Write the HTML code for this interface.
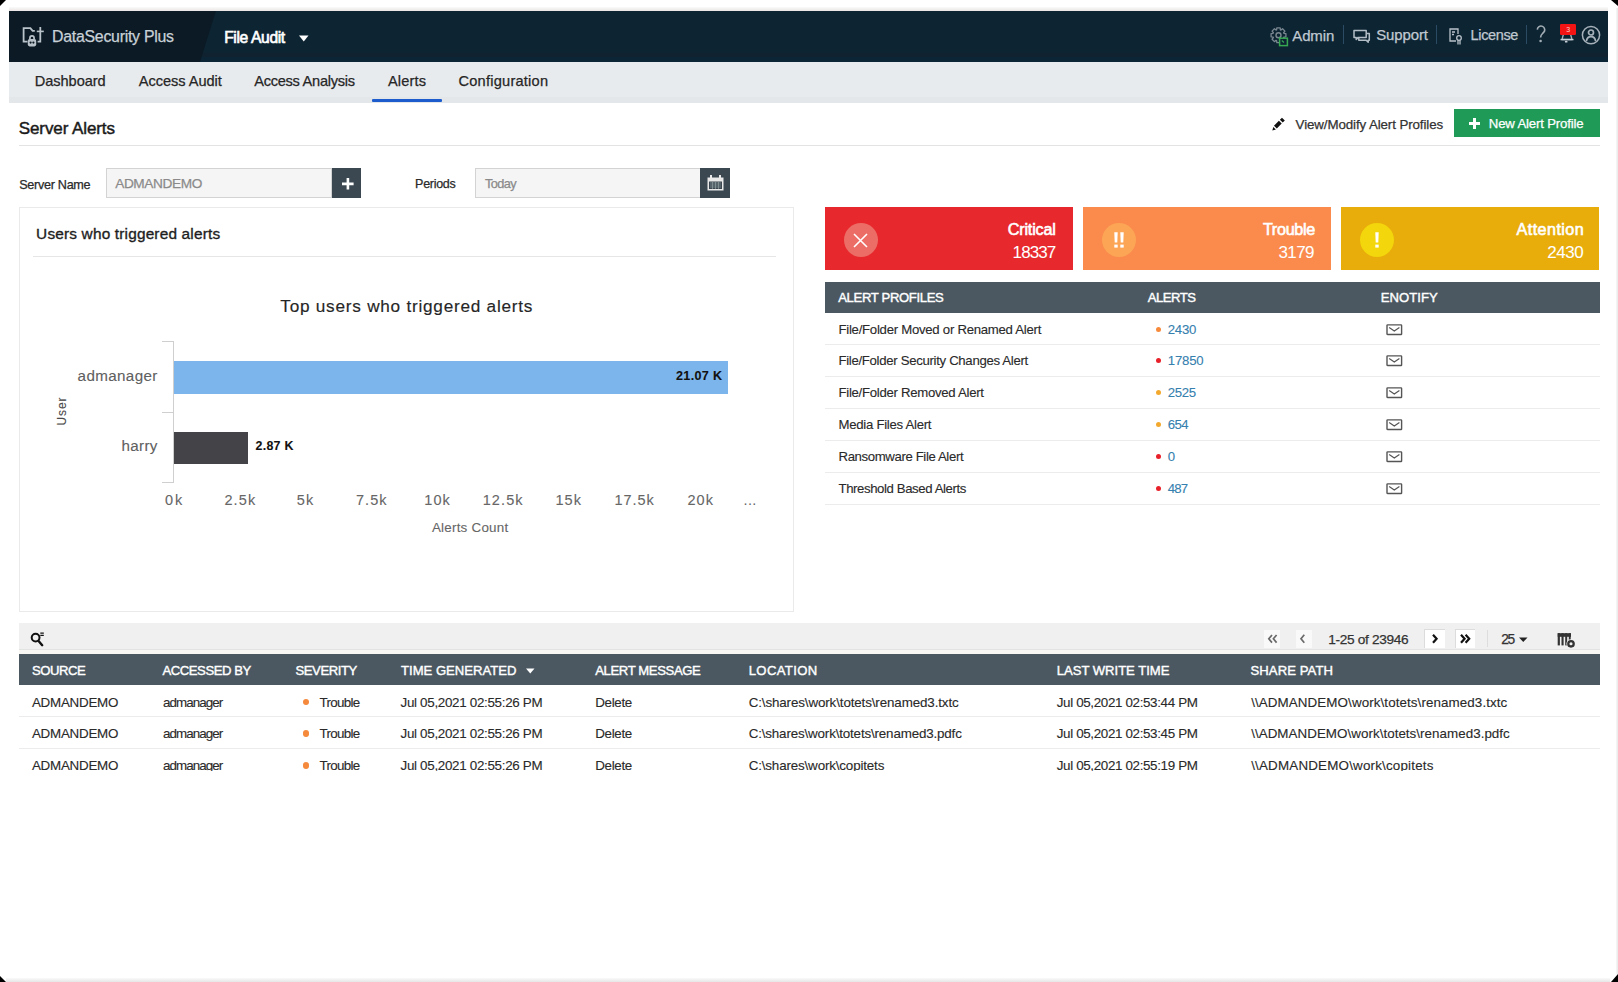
<!DOCTYPE html>
<html><head><meta charset="utf-8"><title>Server Alerts</title>
<style>
html,body{margin:0;padding:0;}
body{width:1618px;height:982px;position:relative;overflow:hidden;background:#fff;font-family:"Liberation Sans",sans-serif;}
body div{position:absolute;}
.t{white-space:nowrap;line-height:1;-webkit-text-stroke:0.25px currentColor;}
svg{position:absolute;}
</style></head><body>

<svg style="left:0;top:0" width="8" height="8"><path d="M0 0H6L0 6Z" fill="#000"/></svg>
<svg style="left:1608px;top:0" width="10" height="8"><path d="M3 0H10V6Z" fill="#000"/></svg>
<svg style="left:0;top:974px" width="8" height="8"><path d="M0 2L6 8H0Z" fill="#000"/></svg>
<svg style="left:1608px;top:974px" width="10" height="8"><path d="M10 0V8H3Z" fill="#000"/></svg>
<div style="left:6px;top:978px;width:1604px;height:4px;background:linear-gradient(#fafafa,#e6e6e6);"></div>
<div style="left:1616px;top:8px;width:2px;height:966px;background:linear-gradient(90deg,#f8f8f8,#e8e8e8);"></div>
<div style="left:9px;top:7px;width:1599px;height:4px;background:linear-gradient(#fbfafa,#ebe5e5);"></div>
<div style="left:9px;top:11px;width:1599px;height:51px;background:#0d2533;"></div>
<div style="left:200px;top:53px;width:1408px;height:4px;background:#10222f;"></div>
<div style="left:200px;top:57px;width:1408px;height:5px;background:#0b2536;"></div>
<svg style="left:9px;top:11px" width="210" height="51"><path d="M0 0H207L191 51H0Z" fill="#0b1a24"/></svg>
<svg style="left:18px;top:22px" width="32" height="30" viewBox="0 0 32 30" fill="none" stroke="#b9c2c9" stroke-width="1.8">
<path d="M9.5 19.6H5.6V6.2H12.4L14.6 8.8H16.8"/><path d="M22.3 5V19.6H19.6"/><path d="M18.8 9.4H25.8" stroke-width="1.6"/>
<path d="M11.9 17.5V15.9A2.1 2.1 0 0 1 16.1 15.9V17.5" stroke-width="1.7"/>
<rect x="9.8" y="17" width="8.4" height="7.4" rx="1.8" fill="#b9c2c9" stroke="none"/>
<circle cx="12.6" cy="20.6" r="1.1" fill="#0a1821" stroke="none"/><circle cx="15.4" cy="20.6" r="1.1" fill="#0a1821" stroke="none"/>
</svg>
<div class="t" style="left:52.10px;top:29.30px;font-size:15.89px;letter-spacing:-0.269px;color:#c9d1d8;">DataSecurity Plus</div>
<div class="t" style="left:224.20px;top:29.51px;font-size:15.64px;letter-spacing:-0.361px;color:#ffffff;-webkit-text-stroke:0.65px currentColor;">File Audit</div>
<svg style="left:299px;top:35px" width="10" height="7"><path d="M0 0.5H9.5L4.75 6.5Z" fill="#fff"/></svg>
<div class="t" style="left:1292.30px;top:27.87px;font-size:14.98px;letter-spacing:-0.116px;color:#c0c9d1;">Admin</div>
<div class="t" style="left:1376.20px;top:27.88px;font-size:14.96px;letter-spacing:-0.106px;color:#c0c9d1;">Support</div>
<div class="t" style="left:1470.60px;top:28.27px;font-size:14.51px;letter-spacing:-0.364px;color:#c0c9d1;">License</div>
<div style="left:1343px;top:25px;width:1px;height:19px;background:#2b4a63;"></div>
<div style="left:1436px;top:25px;width:1px;height:19px;background:#2b4a63;"></div>
<div style="left:1526px;top:25px;width:1px;height:19px;background:#2b4a63;"></div>
<svg style="left:1268px;top:25px" width="22" height="22" viewBox="0 0 22 22" fill="none" stroke="#7a8791">
<path d="M15.87 8.30L17.92 8.54L17.92 11.86L15.87 12.10L15.64 12.66L16.92 14.27L14.57 16.62L12.96 15.34L12.40 15.57L12.16 17.62L8.84 17.62L8.60 15.57L8.04 15.34L6.43 16.62L4.08 14.27L5.36 12.66L5.13 12.10L3.08 11.86L3.08 8.54L5.13 8.30L5.36 7.74L4.08 6.13L6.43 3.78L8.04 5.06L8.60 4.83L8.84 2.78L12.16 2.78L12.40 4.83L12.96 5.06L14.57 3.78L16.92 6.13L15.64 7.74Z" stroke-width="1.3" stroke-linejoin="round"/>
<circle cx="10.5" cy="10.2" r="2.5" stroke-width="1.4"/>
<rect x="11.6" y="13.2" width="7.8" height="7.4" fill="#0d2533" stroke="#37a852" stroke-width="1.5"/>
<path d="M13.8 15.5L16 17.5" stroke="#37a852" stroke-width="1.1"/>
</svg>
<svg style="left:1352px;top:28px" width="20" height="17" viewBox="0 0 20 17" fill="none" stroke="#b3bdc6" stroke-width="1.5" stroke-linejoin="round">
<path d="M2 2.4H14.2V9.4H6.2L4.2 11.4V9.4H2Z"/><path d="M14.2 5.4H17.3V12.3H16.2V14.3L14.2 12.3H6.8V9.6"/>
</svg>
<svg style="left:1449.2px;top:28px" width="15" height="17" viewBox="0 0 15 17" fill="none" stroke="#b9c2ca" stroke-width="1.3">
<path d="M7 13H1V1H9V6"/><path d="M3 4H6M3 6.5H5"/><circle cx="10" cy="10" r="2.3"/><path d="M9 12.3V16.5M11 12.3V16.5"/>
</svg>
<svg style="left:1535px;top:25px" width="12" height="19" viewBox="0 0 12 19" fill="none" stroke="#a3adb5" stroke-width="1.6">
<path d="M2.3 4.6A3.7 3.7 0 1 1 8.6 7.4C7.2 8.9 5.6 9.6 5.6 12.6"/><circle cx="5.6" cy="16" r="1.3" fill="#a3adb5" stroke="none"/></svg>
<svg style="left:1558px;top:23px" width="20" height="22" viewBox="0 0 20 22" fill="none">
<path d="M4 16.5L5.5 11H12.5L14 16.5Z" stroke="#a9b3bb" stroke-width="1.3" stroke-linejoin="round"/><path d="M2.5 16.6H15.5" stroke="#c9d1d8" stroke-width="1.4"/><ellipse cx="8.2" cy="18.7" rx="1.4" ry="0.9" fill="#c9d1d8"/>
<rect x="2" y="1" width="16" height="11" rx="1.2" fill="#f41414"/>
<text x="10.2" y="8.6" font-family="Liberation Sans" font-size="7" fill="#ffd0d0" text-anchor="middle">3</text>
</svg>
<svg style="left:1581px;top:25px" width="20" height="20" viewBox="0 0 20 20" fill="none" stroke="#a7b1ba" stroke-width="1.5">
<circle cx="10" cy="10.1" r="8.6"/><circle cx="10" cy="7.5" r="2.5" stroke-width="1.7"/><path d="M5.4 16.2C5.8 13 7.6 11.6 10 11.6S14.2 13 14.6 16.2" stroke-width="1.7"/>
</svg>
<div style="left:9px;top:62px;width:1599px;height:41px;background:#e8ebee;"></div>
<div style="left:9px;top:97px;width:1599px;height:6px;background:#e4e7ea;"></div>
<div class="t" style="left:34.80px;top:74.49px;font-size:14.60px;letter-spacing:-0.062px;color:#262626;">Dashboard</div>
<div class="t" style="left:138.70px;top:74.39px;font-size:14.60px;letter-spacing:-0.035px;color:#262626;">Access Audit</div>
<div class="t" style="left:254.20px;top:74.29px;font-size:14.60px;letter-spacing:-0.270px;color:#262626;">Access Analysis</div>
<div class="t" style="left:388.00px;top:74.29px;font-size:14.60px;letter-spacing:0.139px;color:#262626;">Alerts</div>
<div class="t" style="left:458.50px;top:74.29px;font-size:14.60px;letter-spacing:0.228px;color:#262626;">Configuration</div>
<div style="left:372px;top:99px;width:70px;height:3px;background:#1c5ccd;border-radius:1px;"></div>
<div class="t" style="left:18.70px;top:120.35px;font-size:17.00px;letter-spacing:-0.085px;color:#1a1a1a;-webkit-text-stroke:0.45px currentColor;">Server Alerts</div>
<div style="left:19px;top:145px;width:1581px;height:1px;background:#e3e3e3;"></div>
<svg style="left:1268px;top:114px" width="20" height="20" viewBox="0 0 20 20"><path d="M7.4 13.1L12.3 8.2M13.3 7.2L15.4 5.1" stroke="#111" stroke-width="4"/><path d="M4.3 16.5L5.3 12.9L7.9 15.5Z" fill="#111"/></svg>
<div class="t" style="left:1295.60px;top:117.56px;font-size:13.34px;letter-spacing:-0.104px;color:#333333;">View/Modify Alert Profiles</div>
<div style="left:1454px;top:109px;width:146px;height:28px;background:#1f9b57;"></div>
<svg style="left:1469px;top:118px" width="11" height="11"><path d="M4 0H7V4H11V7H7V11H4V7H0V4H4Z" fill="#fff"/></svg>
<div class="t" style="left:1488.80px;top:117.18px;font-size:13.20px;letter-spacing:-0.172px;color:#ffffff;">New Alert Profile</div>
<div class="t" style="left:19.20px;top:178.66px;font-size:12.64px;letter-spacing:-0.296px;color:#2a2a2a;">Server Name</div>
<div style="left:106px;top:168px;width:224px;height:28px;background:#f5f5f5;border:1px solid #d3d3d3;"></div>
<div class="t" style="left:115.20px;top:176.98px;font-size:13.67px;letter-spacing:-0.393px;color:#8a8a8a;">ADMANDEMO</div>
<div style="left:332px;top:168px;width:29px;height:30px;background:#3b4852;"></div>
<svg style="left:342px;top:177.5px" width="12" height="12"><path d="M4.6 0H7.2V4.6H11.6V7.2H7.2V11.6H4.6V7.2H0V4.6H4.6Z" fill="#fff"/></svg>
<div class="t" style="left:415.10px;top:177.79px;font-size:12.49px;letter-spacing:-0.289px;color:#2a2a2a;">Periods</div>
<div style="left:475px;top:168px;width:224px;height:28px;background:#f5f5f5;border:1px solid #d3d3d3;"></div>
<div class="t" style="left:485.10px;top:178.06px;font-size:12.76px;letter-spacing:-0.640px;color:#8a8a8a;">Today</div>
<div style="left:700px;top:168px;width:30px;height:30px;background:#3b4852;"></div>
<svg style="left:707px;top:175px" width="17" height="16" viewBox="0 0 17 16"><rect x="0.5" y="2.5" width="16" height="13" fill="#e8e8e8"/><rect x="2" y="6.5" width="13" height="7.5" fill="#3c4650"/><rect x="3" y="0" width="2" height="4" fill="#e8e8e8"/><rect x="12" y="0" width="2" height="4" fill="#e8e8e8"/>
<path d="M3 8H14M3 10H14M3 12H14M5.5 7V14M8.5 7V14M11.5 7V14" stroke="#9aa" stroke-width="0.6"/></svg>
<div style="left:19px;top:207px;width:773px;height:403px;background:#fff;border:1px solid #eaeaea;"></div>
<div class="t" style="left:36.10px;top:226.01px;font-size:15.40px;letter-spacing:0.175px;color:#1e1e1e;-webkit-text-stroke:0.35px currentColor;">Users who triggered alerts</div>
<div style="left:33px;top:256px;width:743px;height:1px;background:#e6e6e6;"></div>
<div class="t" style="left:280.30px;top:297.98px;font-size:17.20px;letter-spacing:0.755px;color:#262626;-webkit-text-stroke:0.15px currentColor;">Top users who triggered alerts</div>
<div style="left:173px;top:341px;width:1px;height:142px;background:#cfcfcf;"></div>
<div style="left:162px;top:341px;width:11px;height:1px;background:#cfcfcf;"></div>
<div style="left:162px;top:412px;width:11px;height:1px;background:#cfcfcf;"></div>
<div style="left:162px;top:482px;width:11px;height:1px;background:#cfcfcf;"></div>
<div style="left:174px;top:361px;width:554px;height:33px;background:#7cb5ec;"></div>
<div style="left:174px;top:432px;width:74px;height:32px;background:#434348;"></div>
<div class="t" style="left:676.00px;top:370.49px;font-size:12.60px;letter-spacing:0.340px;color:#111111;font-weight:bold;-webkit-text-stroke:0.1px currentColor;">21.07 K</div>
<div class="t" style="left:255.60px;top:440.06px;font-size:12.40px;letter-spacing:0.256px;color:#111111;font-weight:bold;-webkit-text-stroke:0.1px currentColor;">2.87 K</div>
<div class="t" style="left:77.60px;top:367.98px;font-size:15.20px;letter-spacing:0.361px;color:#606060;-webkit-text-stroke:0.1px currentColor;">admanager</div>
<div class="t" style="left:121.60px;top:437.68px;font-size:15.20px;letter-spacing:0.286px;color:#606060;-webkit-text-stroke:0.1px currentColor;">harry</div>
<div class="t" style="left:48px;top:406px;width:27px;height:12px;font-size:12px;letter-spacing:0.9px;color:#4a4a4a;-webkit-text-stroke:0.1px #4a4a4a;transform:rotate(-90deg);transform-origin:50% 50%;text-align:center;">User</div>
<div class="t" style="left:165.00px;top:493.18px;font-size:14.50px;letter-spacing:1.930px;color:#666666;-webkit-text-stroke:0.1px currentColor;">0k</div>
<div class="t" style="left:224.40px;top:493.18px;font-size:14.50px;letter-spacing:1.141px;color:#666666;-webkit-text-stroke:0.1px currentColor;">2.5k</div>
<div class="t" style="left:296.70px;top:493.18px;font-size:14.50px;letter-spacing:1.330px;color:#666666;-webkit-text-stroke:0.1px currentColor;">5k</div>
<div class="t" style="left:356.00px;top:493.18px;font-size:14.50px;letter-spacing:1.041px;color:#666666;-webkit-text-stroke:0.1px currentColor;">7.5k</div>
<div class="t" style="left:424.20px;top:493.18px;font-size:14.50px;letter-spacing:1.141px;color:#666666;-webkit-text-stroke:0.1px currentColor;">10k</div>
<div class="t" style="left:482.70px;top:493.18px;font-size:14.50px;letter-spacing:1.094px;color:#666666;-webkit-text-stroke:0.1px currentColor;">12.5k</div>
<div class="t" style="left:555.40px;top:493.18px;font-size:14.50px;letter-spacing:1.091px;color:#666666;-webkit-text-stroke:0.1px currentColor;">15k</div>
<div class="t" style="left:614.40px;top:493.18px;font-size:14.50px;letter-spacing:0.944px;color:#666666;-webkit-text-stroke:0.1px currentColor;">17.5k</div>
<div class="t" style="left:687.40px;top:493.18px;font-size:14.50px;letter-spacing:1.091px;color:#666666;-webkit-text-stroke:0.1px currentColor;">20k</div>
<div class="t" style="left:743.50px;top:493.18px;font-size:14.50px;letter-spacing:0.396px;color:#666666;-webkit-text-stroke:0;">...</div>
<div class="t" style="left:431.90px;top:520.91px;font-size:13.40px;letter-spacing:0.239px;color:#666666;-webkit-text-stroke:0.1px currentColor;">Alerts Count</div>
<div style="left:825px;top:207px;width:248px;height:63px;background:#e7292e;"></div>
<div style="left:843.8px;top:223px;width:34px;height:34px;border-radius:50%;background:#ec6d66;"></div>
<svg style="left:853.3px;top:232.5px" width="15" height="15"><path d="M1 1L14 14M14 1L1 14" stroke="#fff" stroke-width="1.6"/></svg>
<div class="t" style="left:1007.70px;top:220.63px;font-size:16.20px;letter-spacing:-0.170px;color:#ffffff;-webkit-text-stroke:0.6px currentColor;">Critical</div>
<div class="t" style="left:1012.60px;top:244.45px;font-size:17.00px;letter-spacing:-0.890px;color:#ffffff;-webkit-text-stroke:0.05px currentColor;">18337</div>
<div style="left:1083px;top:207px;width:248px;height:63px;background:#fa8b4d;"></div>
<div style="left:1101.8px;top:223px;width:34px;height:34px;border-radius:50%;background:#fca555;"></div>
<svg style="left:1112.8px;top:232px" width="12" height="16"><path d="M1.3 0.3H4.7L4.3 10.6H1.7ZM7.3 0.3H10.7L10.3 10.6H7.7Z" fill="#fff"/><rect x="1.3" y="12.6" width="3.4" height="3" fill="#fff"/><rect x="7.3" y="12.6" width="3.4" height="3" fill="#fff"/></svg>
<div class="t" style="left:1262.90px;top:220.63px;font-size:16.20px;letter-spacing:-0.308px;color:#ffffff;-webkit-text-stroke:0.6px currentColor;">Trouble</div>
<div class="t" style="left:1278.50px;top:244.45px;font-size:17.00px;letter-spacing:-0.608px;color:#ffffff;-webkit-text-stroke:0.05px currentColor;">3179</div>
<div style="left:1341px;top:207px;width:258px;height:63px;background:#e8ad0b;"></div>
<div style="left:1359.8px;top:223px;width:34px;height:34px;border-radius:50%;background:#f3d60c;"></div>
<svg style="left:1374.8px;top:232px" width="5" height="16"><path d="M0.3 0.3H3.7L3.3 10.6H0.7Z" fill="#fff"/><rect x="0.3" y="12.6" width="3.4" height="3" fill="#fff"/></svg>
<div class="t" style="left:1516.60px;top:220.63px;font-size:16.20px;letter-spacing:0.411px;color:#ffffff;-webkit-text-stroke:0.6px currentColor;">Attention</div>
<div class="t" style="left:1547.20px;top:244.45px;font-size:17.00px;letter-spacing:-0.408px;color:#ffffff;-webkit-text-stroke:0.05px currentColor;">2430</div>
<div style="left:825px;top:282px;width:775px;height:31px;background:#4b5862;"></div>
<div class="t" style="left:838.20px;top:291.47px;font-size:13.10px;letter-spacing:-0.344px;color:#ffffff;-webkit-text-stroke:0.4px currentColor;">ALERT PROFILES</div>
<div class="t" style="left:1147.80px;top:291.47px;font-size:13.10px;letter-spacing:-0.499px;color:#ffffff;-webkit-text-stroke:0.4px currentColor;">ALERTS</div>
<div class="t" style="left:1380.80px;top:291.47px;font-size:13.10px;letter-spacing:0.035px;color:#ffffff;-webkit-text-stroke:0.4px currentColor;">ENOTIFY</div>
<div class="t" style="left:838.50px;top:322.58px;font-size:13.20px;letter-spacing:-0.271px;color:#2a2a2a;-webkit-text-stroke:0.12px currentColor;">File/Folder Moved or Renamed Alert</div>
<div style="left:1155.5px;top:326.5px;width:5px;height:5px;border-radius:50%;background:#f78a3b"></div>
<div class="t" style="left:1167.80px;top:322.58px;font-size:13.20px;letter-spacing:-0.257px;color:#3580ae;-webkit-text-stroke:0.1px currentColor;">2430</div>
<svg style="left:1386px;top:323.5px" width="17" height="12" viewBox="0 0 17 12" fill="none" stroke="#555" stroke-width="1.4"><rect x="1" y="0.9" width="14.6" height="9.6" rx="0.6"/><path d="M3.2 3.4L8.3 7L13.4 3.4" stroke-width="1.2"/></svg>
<div style="left:825px;top:344px;width:775px;height:1px;background:#ececec;"></div>
<div class="t" style="left:838.50px;top:354.48px;font-size:13.20px;letter-spacing:-0.315px;color:#2a2a2a;-webkit-text-stroke:0.12px currentColor;">File/Folder Security Changes Alert</div>
<div style="left:1155.5px;top:358.4px;width:5px;height:5px;border-radius:50%;background:#e8202a"></div>
<div class="t" style="left:1167.80px;top:354.48px;font-size:13.20px;letter-spacing:-0.224px;color:#3580ae;-webkit-text-stroke:0.1px currentColor;">17850</div>
<svg style="left:1386px;top:355.4px" width="17" height="12" viewBox="0 0 17 12" fill="none" stroke="#555" stroke-width="1.4"><rect x="1" y="0.9" width="14.6" height="9.6" rx="0.6"/><path d="M3.2 3.4L8.3 7L13.4 3.4" stroke-width="1.2"/></svg>
<div style="left:825px;top:376px;width:775px;height:1px;background:#ececec;"></div>
<div class="t" style="left:838.50px;top:386.38px;font-size:13.20px;letter-spacing:-0.291px;color:#2a2a2a;-webkit-text-stroke:0.12px currentColor;">File/Folder Removed Alert</div>
<div style="left:1155.5px;top:390.3px;width:5px;height:5px;border-radius:50%;background:#f2a92e"></div>
<div class="t" style="left:1167.80px;top:386.38px;font-size:13.20px;letter-spacing:-0.390px;color:#3580ae;-webkit-text-stroke:0.1px currentColor;">2525</div>
<svg style="left:1386px;top:387.3px" width="17" height="12" viewBox="0 0 17 12" fill="none" stroke="#555" stroke-width="1.4"><rect x="1" y="0.9" width="14.6" height="9.6" rx="0.6"/><path d="M3.2 3.4L8.3 7L13.4 3.4" stroke-width="1.2"/></svg>
<div style="left:825px;top:408px;width:775px;height:1px;background:#ececec;"></div>
<div class="t" style="left:838.50px;top:418.28px;font-size:13.20px;letter-spacing:-0.278px;color:#2a2a2a;-webkit-text-stroke:0.12px currentColor;">Media Files Alert</div>
<div style="left:1155.5px;top:422.2px;width:5px;height:5px;border-radius:50%;background:#f2a92e"></div>
<div class="t" style="left:1167.80px;top:418.28px;font-size:13.20px;letter-spacing:-0.572px;color:#3580ae;-webkit-text-stroke:0.1px currentColor;">654</div>
<svg style="left:1386px;top:419.2px" width="17" height="12" viewBox="0 0 17 12" fill="none" stroke="#555" stroke-width="1.4"><rect x="1" y="0.9" width="14.6" height="9.6" rx="0.6"/><path d="M3.2 3.4L8.3 7L13.4 3.4" stroke-width="1.2"/></svg>
<div style="left:825px;top:440px;width:775px;height:1px;background:#ececec;"></div>
<div class="t" style="left:838.50px;top:450.18px;font-size:13.20px;letter-spacing:-0.380px;color:#2a2a2a;-webkit-text-stroke:0.12px currentColor;">Ransomware File Alert</div>
<div style="left:1155.5px;top:454.1px;width:5px;height:5px;border-radius:50%;background:#e8202a"></div>
<div class="t" style="left:1167.80px;top:450.18px;font-size:13.20px;letter-spacing:0.000px;color:#3580ae;-webkit-text-stroke:0.1px currentColor;">0</div>
<svg style="left:1386px;top:451.1px" width="17" height="12" viewBox="0 0 17 12" fill="none" stroke="#555" stroke-width="1.4"><rect x="1" y="0.9" width="14.6" height="9.6" rx="0.6"/><path d="M3.2 3.4L8.3 7L13.4 3.4" stroke-width="1.2"/></svg>
<div style="left:825px;top:472px;width:775px;height:1px;background:#ececec;"></div>
<div class="t" style="left:838.50px;top:482.08px;font-size:13.20px;letter-spacing:-0.404px;color:#2a2a2a;-webkit-text-stroke:0.12px currentColor;">Threshold Based Alerts</div>
<div style="left:1155.5px;top:486.0px;width:5px;height:5px;border-radius:50%;background:#e8202a"></div>
<div class="t" style="left:1167.80px;top:482.08px;font-size:13.20px;letter-spacing:-0.822px;color:#3580ae;-webkit-text-stroke:0.1px currentColor;">487</div>
<svg style="left:1386px;top:483.0px" width="17" height="12" viewBox="0 0 17 12" fill="none" stroke="#555" stroke-width="1.4"><rect x="1" y="0.9" width="14.6" height="9.6" rx="0.6"/><path d="M3.2 3.4L8.3 7L13.4 3.4" stroke-width="1.2"/></svg>
<div style="left:825px;top:504px;width:775px;height:1px;background:#ececec;"></div>
<div style="left:19px;top:623px;width:1581px;height:26px;background:#f0f0f0;"></div>
<div style="left:19px;top:649px;width:1581px;height:1px;background:#e2e4e2;"></div>
<div style="left:19px;top:650px;width:1581px;height:4px;background:#f8f7f4;"></div>
<svg style="left:29px;top:630px" width="17" height="18" viewBox="0 0 17 18" fill="none" stroke="#111" stroke-width="2">
<circle cx="6.6" cy="7.6" r="3.9"/><path d="M9.8 11.2L13.2 15.2" stroke-width="2.4" stroke-linecap="round"/><path d="M11.3 3.1H14.8M11.3 5.3H14.8" stroke-width="1.3"/></svg>
<div style="left:1264px;top:630px;width:16px;height:18px;background:#f9f9f9;"></div>
<div style="left:1296px;top:630px;width:16px;height:18px;background:#f9f9f9;"></div>
<div style="left:1424px;top:629px;width:21px;height:19px;background:#ffffff;box-sizing:border-box;border-top:1px solid #dcdcdc;border-left:1px solid #dcdcdc;"></div>
<div style="left:1455px;top:629px;width:20px;height:19px;background:#ffffff;box-sizing:border-box;border-top:1px solid #dcdcdc;border-left:1px solid #dcdcdc;"></div>
<svg style="left:1266px;top:633px" width="14" height="12" viewBox="0 0 14 12" fill="none" stroke="#6a6a6a" stroke-width="1.7"><path d="M6 2L2.8 5.8L6 9.6M10.6 2L7.4 5.8L10.6 9.6"/></svg>
<svg style="left:1298px;top:633px" width="10" height="12" viewBox="0 0 10 12" fill="none" stroke="#6a6a6a" stroke-width="1.7"><path d="M6.3 1.8L3 5.8L6.3 9.8"/></svg>
<svg style="left:1430px;top:633px" width="10" height="12" viewBox="0 0 10 12" fill="none" stroke="#111" stroke-width="2.2"><path d="M3 1.8L6.6 5.8L3 9.8"/></svg>
<svg style="left:1458px;top:633px" width="14" height="12" viewBox="0 0 14 12" fill="none" stroke="#111" stroke-width="2.2"><path d="M3 1.8L6.6 5.8L3 9.8M7.6 1.8L11.2 5.8L7.6 9.8"/></svg>
<div class="t" style="left:1328.30px;top:632.89px;font-size:13.66px;letter-spacing:-0.323px;color:#333333;">1-25 of 23946</div>
<div style="left:1487px;top:630px;width:1px;height:17px;background:#dddddd;"></div>
<div class="t" style="left:1501.20px;top:632.76px;font-size:13.81px;letter-spacing:-1.325px;color:#333333;">25</div>
<svg style="left:1519px;top:637px" width="9" height="6"><path d="M0 0.5H8.5L4.25 5Z" fill="#222"/></svg>
<svg style="left:1557px;top:632px" width="20" height="17" viewBox="0 0 20 17" fill="#333">
<rect x="0.7" y="1.2" width="13.3" height="3.6"/><rect x="0.7" y="1.2" width="2.2" height="12.2"/><rect x="4.5" y="1.2" width="2.1" height="12.2"/><rect x="8.2" y="1.2" width="2" height="12.2"/><rect x="11.8" y="1.2" width="1.9" height="7.5"/>
<circle cx="14" cy="11.8" r="4.6" fill="#efefef"/><circle cx="14" cy="11.8" r="2.7" fill="none" stroke="#333" stroke-width="2.3"/></svg>
<div style="left:19px;top:654px;width:1581px;height:31px;background:#4b5862;"></div>
<div class="t" style="left:31.90px;top:664.16px;font-size:13.10px;letter-spacing:-0.454px;color:#ffffff;-webkit-text-stroke:0.4px currentColor;">SOURCE</div>
<div class="t" style="left:162.40px;top:664.16px;font-size:13.10px;letter-spacing:-0.421px;color:#ffffff;-webkit-text-stroke:0.4px currentColor;">ACCESSED BY</div>
<div class="t" style="left:295.50px;top:664.16px;font-size:13.10px;letter-spacing:-0.426px;color:#ffffff;-webkit-text-stroke:0.4px currentColor;">SEVERITY</div>
<div class="t" style="left:401.10px;top:664.16px;font-size:13.10px;letter-spacing:-0.014px;color:#ffffff;-webkit-text-stroke:0.4px currentColor;">TIME GENERATED</div>
<div class="t" style="left:595.20px;top:664.16px;font-size:13.10px;letter-spacing:-0.373px;color:#ffffff;-webkit-text-stroke:0.4px currentColor;">ALERT MESSAGE</div>
<div class="t" style="left:748.70px;top:664.16px;font-size:13.10px;letter-spacing:0.368px;color:#ffffff;-webkit-text-stroke:0.4px currentColor;">LOCATION</div>
<div class="t" style="left:1056.70px;top:664.16px;font-size:13.10px;letter-spacing:-0.018px;color:#ffffff;-webkit-text-stroke:0.4px currentColor;">LAST WRITE TIME</div>
<div class="t" style="left:1250.50px;top:664.16px;font-size:13.10px;letter-spacing:0.084px;color:#ffffff;-webkit-text-stroke:0.4px currentColor;">SHARE PATH</div>
<svg style="left:526px;top:668px" width="9" height="6"><path d="M0 0.5H8.5L4.25 5.5Z" fill="#fff"/></svg>
<div style="left:0;top:686px;width:1618px;height:85px;overflow:hidden;">
<div class="t" style="left:31.90px;top:9.81px;font-size:13.40px;letter-spacing:-0.247px;color:#2a2a2a;-webkit-text-stroke:0.12px currentColor;">ADMANDEMO</div>
<div class="t" style="left:163.00px;top:9.81px;font-size:13.40px;letter-spacing:-0.951px;color:#2a2a2a;-webkit-text-stroke:0.12px currentColor;">admanager</div>
<div style="left:302.5px;top:12.7px;width:6.5px;height:6.5px;border-radius:50%;background:#f5893c"></div>
<div class="t" style="left:319.60px;top:9.81px;font-size:13.40px;letter-spacing:-0.710px;color:#2a2a2a;-webkit-text-stroke:0.12px currentColor;">Trouble</div>
<div class="t" style="left:400.50px;top:9.81px;font-size:13.40px;letter-spacing:-0.309px;color:#2a2a2a;-webkit-text-stroke:0.12px currentColor;">Jul 05,2021 02:55:26 PM</div>
<div class="t" style="left:595.20px;top:9.81px;font-size:13.40px;letter-spacing:-0.325px;color:#2a2a2a;-webkit-text-stroke:0.12px currentColor;">Delete</div>
<div class="t" style="left:748.70px;top:9.81px;font-size:13.40px;letter-spacing:-0.128px;color:#2a2a2a;-webkit-text-stroke:0.12px currentColor;">C:\shares\work\totets\renamed3.txtc</div>
<div class="t" style="left:1056.70px;top:9.81px;font-size:13.40px;letter-spacing:-0.350px;color:#2a2a2a;-webkit-text-stroke:0.12px currentColor;">Jul 05,2021 02:53:44 PM</div>
<div class="t" style="left:1251.20px;top:9.81px;font-size:13.40px;letter-spacing:0.086px;color:#2a2a2a;-webkit-text-stroke:0.12px currentColor;">\\ADMANDEMO\work\totets\renamed3.txtc</div>
<div style="left:19px;top:30px;width:1581px;height:1px;background:#ececec;"></div>
<div class="t" style="left:31.90px;top:41.46px;font-size:13.40px;letter-spacing:-0.247px;color:#2a2a2a;-webkit-text-stroke:0.12px currentColor;">ADMANDEMO</div>
<div class="t" style="left:163.00px;top:41.46px;font-size:13.40px;letter-spacing:-0.951px;color:#2a2a2a;-webkit-text-stroke:0.12px currentColor;">admanager</div>
<div style="left:302.5px;top:44.4px;width:6.5px;height:6.5px;border-radius:50%;background:#f5893c"></div>
<div class="t" style="left:319.60px;top:41.46px;font-size:13.40px;letter-spacing:-0.710px;color:#2a2a2a;-webkit-text-stroke:0.12px currentColor;">Trouble</div>
<div class="t" style="left:400.50px;top:41.46px;font-size:13.40px;letter-spacing:-0.309px;color:#2a2a2a;-webkit-text-stroke:0.12px currentColor;">Jul 05,2021 02:55:26 PM</div>
<div class="t" style="left:595.20px;top:41.46px;font-size:13.40px;letter-spacing:-0.325px;color:#2a2a2a;-webkit-text-stroke:0.12px currentColor;">Delete</div>
<div class="t" style="left:748.70px;top:41.46px;font-size:13.40px;letter-spacing:-0.166px;color:#2a2a2a;-webkit-text-stroke:0.12px currentColor;">C:\shares\work\totets\renamed3.pdfc</div>
<div class="t" style="left:1056.70px;top:41.46px;font-size:13.40px;letter-spacing:-0.350px;color:#2a2a2a;-webkit-text-stroke:0.12px currentColor;">Jul 05,2021 02:53:45 PM</div>
<div class="t" style="left:1251.20px;top:41.46px;font-size:13.40px;letter-spacing:0.031px;color:#2a2a2a;-webkit-text-stroke:0.12px currentColor;">\\ADMANDEMO\work\totets\renamed3.pdfc</div>
<div style="left:19px;top:62px;width:1581px;height:1px;background:#ececec;"></div>
<div class="t" style="left:31.90px;top:73.11px;font-size:13.40px;letter-spacing:-0.247px;color:#2a2a2a;-webkit-text-stroke:0.12px currentColor;">ADMANDEMO</div>
<div class="t" style="left:163.00px;top:73.11px;font-size:13.40px;letter-spacing:-0.951px;color:#2a2a2a;-webkit-text-stroke:0.12px currentColor;">admanager</div>
<div style="left:302.5px;top:76.0px;width:6.5px;height:6.5px;border-radius:50%;background:#f5893c"></div>
<div class="t" style="left:319.60px;top:73.11px;font-size:13.40px;letter-spacing:-0.710px;color:#2a2a2a;-webkit-text-stroke:0.12px currentColor;">Trouble</div>
<div class="t" style="left:400.50px;top:73.11px;font-size:13.40px;letter-spacing:-0.309px;color:#2a2a2a;-webkit-text-stroke:0.12px currentColor;">Jul 05,2021 02:55:26 PM</div>
<div class="t" style="left:595.20px;top:73.11px;font-size:13.40px;letter-spacing:-0.325px;color:#2a2a2a;-webkit-text-stroke:0.12px currentColor;">Delete</div>
<div class="t" style="left:748.70px;top:73.11px;font-size:13.40px;letter-spacing:-0.159px;color:#2a2a2a;-webkit-text-stroke:0.12px currentColor;">C:\shares\work\copitets</div>
<div class="t" style="left:1056.70px;top:73.11px;font-size:13.40px;letter-spacing:-0.350px;color:#2a2a2a;-webkit-text-stroke:0.12px currentColor;">Jul 05,2021 02:55:19 PM</div>
<div class="t" style="left:1251.20px;top:73.11px;font-size:13.40px;letter-spacing:0.181px;color:#2a2a2a;-webkit-text-stroke:0.12px currentColor;">\\ADMANDEMO\work\copitets</div>
</div>
</body></html>
